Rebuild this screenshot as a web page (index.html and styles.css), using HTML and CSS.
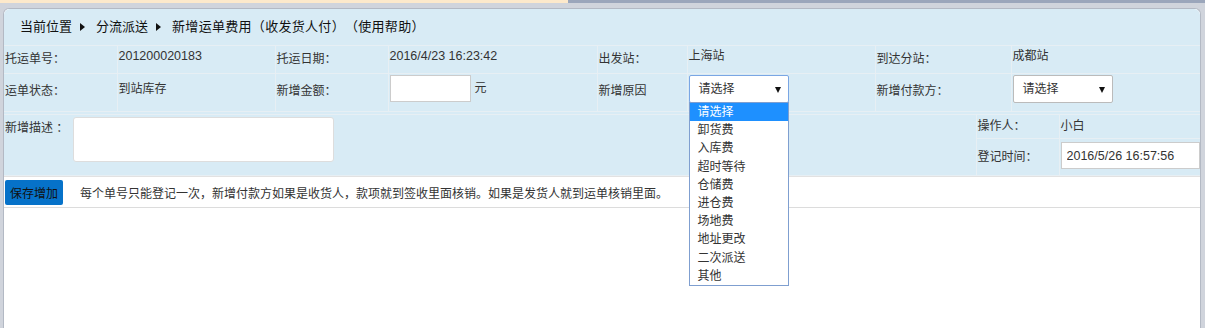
FILE: index.html
```html
<!DOCTYPE html>
<html>
<head>
  <title>新增运单费用</title>
  <meta charset="UTF-8">
  <link rel="stylesheet" href="styles.css">
</head>
<body>
  <div class="topbar">
    <div class="topbar-tab"></div>
  </div>

  <div class="frame">
    <div class="crumbs">
      <span>当前位置</span><i class="arrow"></i><span>分流派送</span><i class="arrow"></i><span class="crumb-current">新增运单费用（收发货人付）（使用帮助）</span>
    </div>

    <div class="panel">
      <table class="info">
        <colgroup>
          <col style="width:113px">
          <col style="width:158px">
          <col style="width:113px">
          <col style="width:209px">
          <col style="width:90px">
          <col style="width:188px">
          <col style="width:136px">
          <col>
        </colgroup>
        <tr class="row-a">
          <td class="label first">托运单号：</td>
          <td class="value num">201200020183</td>
          <td class="label">托运日期：</td>
          <td class="value num">2016/4/23 16:23:42</td>
          <td class="label">出发站：</td>
          <td class="value">上海站</td>
          <td class="label">到达分站：</td>
          <td class="value">成都站</td>
        </tr>
        <tr class="row-b">
          <td class="label first">运单状态：</td>
          <td class="value">到站库存</td>
          <td class="label">新增金额：</td>
          <td class="field"><input type="text" class="text-input amount"><span class="unit">元</span></td>
          <td class="label">新增原因</td>
          <td class="field">
            <div class="select-wrap">
              <div class="select focused">请选择<i class="caret"></i></div>
              <!-- 展开的下拉列表 -->
              <ul class="options">
                <li class="active">请选择</li>
                <li>卸货费</li>
                <li>入库费</li>
                <li>超时等待</li>
                <li>仓储费</li>
                <li>进仓费</li>
                <li>场地费</li>
                <li>地址更改</li>
                <li>二次派送</li>
                <li>其他</li>
              </ul>
            </div>
          </td>
          <td class="label">新增付款方：</td>
          <td class="field"><div class="select">请选择<i class="caret"></i></div></td>
        </tr>
      </table>

      <table class="extra">
        <colgroup>
          <col>
          <col style="width:83px">
          <col style="width:141px">
        </colgroup>
        <tr class="row-c">
          <td class="desc" rowspan="2">
            <div class="desc-inner">
              <span class="desc-label">新增描述 ：</span>
              <textarea class="desc-text"></textarea>
            </div>
          </td>
          <td class="label">操作人：</td>
          <td class="value">小白</td>
        </tr>
        <tr class="row-d">
          <td class="label">登记时间：</td>
          <td class="field"><input type="text" class="text-input date" value="2016/5/26 16:57:56"></td>
        </tr>
      </table>
    </div>

    <div class="actions">
      <button class="btn-save">保存增加</button>
      <span class="note">每个单号只能登记一次，新增付款方如果是收货人，款项就到签收里面核销。如果是发货人就到运单核销里面。</span>
    </div>
  </div>
</body>
</html>
```

FILE: styles.css
```css
body {
  margin: 0;
  height: 328px;
  overflow: hidden;
  background-color: #d0d4dc;
  font-family: "Liberation Sans", "Noto Sans CJK SC", sans-serif;
  font-size: 12px;
  color: #333;
  text-spacing-trim: space-all;
}
.topbar {
  display: flex;
  height: 3px;
  background-color: #9ba6bb;
}
.topbar-tab {
  width: 568px;
  background-color: #fde9cb;
}
.frame {
  position: relative;
  margin: 5px 4px 0 3px;
  height: 320px;
  background-color: #fff;
  border: 1px solid #b3b9c4;
  border-bottom: none;
  border-radius: 6px 6px 0 0;
}

/* 面包屑 */
.crumbs {
  box-sizing: border-box;
  height: 36px;
  padding: 9px 0 0 16px;
  line-height: 18px;
  font-size: 13px;
  color: #111;
  background-color: #d8ebf5;
  border-radius: 6px 6px 0 0;
}
.crumb-current {
  letter-spacing: 0.3px;
}
.arrow {
  display: inline-block;
  margin: 0 11px 0 8px;
  border-left: 5px solid #111;
  border-top: 4px solid transparent;
  border-bottom: 4px solid transparent;
  vertical-align: 0;
}

/* 表格 */
.panel {
  background-color: #d8ebf5;
}
.info, .extra {
  width: 100%;
  border-collapse: collapse;
  table-layout: fixed;
}
.info td, .extra td {
  border: 1px solid #e7eff4;
  padding: 0 0 0 1px;
  vertical-align: top;
  white-space: nowrap;
  line-height: 16px;
}
.info td.first {
  padding-left: 1px;
  border-left: none;
}
.info td:last-child, .extra td:last-child {
  border-right: none;
}
.info td.num {
  font-size: 12.5px;
}
.row-a {
  height: 28px;
}
.row-a .label {
  padding-top: 5px;
}
.row-a .value {
  padding-top: 2px;
}
.row-b {
  height: 38px;
}
.row-b .label {
  padding-top: 9px;
}
.row-b .value {
  padding-top: 7px;
}
.row-b .field {
  padding-top: 1px;
}
.extra {
  margin-top: 2px;
}
.row-c {
  height: 24px;
}
.row-c .label, .row-c .value {
  padding-top: 3px;
}
.row-d {
  height: 37px;
}
.row-d .label {
  padding-top: 10px;
}
.row-d .field {
  padding-top: 3px;
}
.extra td.desc {
  border-left: none;
  padding: 2px 0 0 1px;
}
.desc-inner {
  display: flex;
  gap: 5px;
}
.desc-label {
  padding-top: 3px;
}
.desc-text {
  box-sizing: border-box;
  width: 261px;
  height: 45px;
  margin: 0;
  border: 1px solid #ddd;
  border-radius: 3px;
  resize: none;
}

/* 输入框与下拉 */
.text-input {
  box-sizing: border-box;
  height: 27px;
  margin: 0;
  padding: 0 5px;
  border: 1px solid #ccc;
  font-family: "Liberation Sans", "Noto Sans CJK SC", sans-serif;
  font-size: 12px;
  color: #333;
  vertical-align: top;
}
.amount {
  width: 81px;
}
.unit {
  display: inline-block;
  margin-left: 4px;
  padding-top: 5px;
}
.date {
  width: 139px;
  font-size: 12.5px;
}
.select-wrap {
  position: relative;
  width: 101px;
}
.select {
  position: relative;
  box-sizing: border-box;
  width: 100px;
  height: 28px;
  padding: 0 0 0 9px;
  line-height: 26px;
  background-color: #fff;
  border: 1px solid #bbb;
  border-radius: 2px;
}
.select.focused {
  border-color: #7aa6e4;
}
.caret {
  position: absolute;
  top: 11px;
  right: 7px;
  border-top: 6px solid #111;
  border-left: 3px solid transparent;
  border-right: 3px solid transparent;
}
.options {
  position: absolute;
  top: 27px;
  left: 0;
  width: 100px;
  box-sizing: border-box;
  margin: 0;
  padding: 0;
  list-style: none;
  background-color: #fff;
  border: 1px solid #7f9fd0;
  z-index: 10;
}
.options li {
  height: 18.2px;
  padding-left: 8px;
  line-height: 18px;
  color: #333;
}
.options li.active {
  background-color: #1e90ff;
  color: #fff;
}

/* 底部操作 */
.actions {
  display: flex;
  align-items: center;
  gap: 17px;
  height: 30px;
  padding-left: 1px;
  border-top: 1px solid #e2e2e2;
  border-bottom: 1px solid #dcdcdc;
}
.btn-save {
  height: 25px;
  padding: 0 5px;
  background-color: #0672c9;
  color: #111;
  border: none;
  border-radius: 2px;
  font-family: "Liberation Sans", "Noto Sans CJK SC", sans-serif;
  font-size: 12px;
  cursor: pointer;
}
.note {
  color: #333;
}
```
